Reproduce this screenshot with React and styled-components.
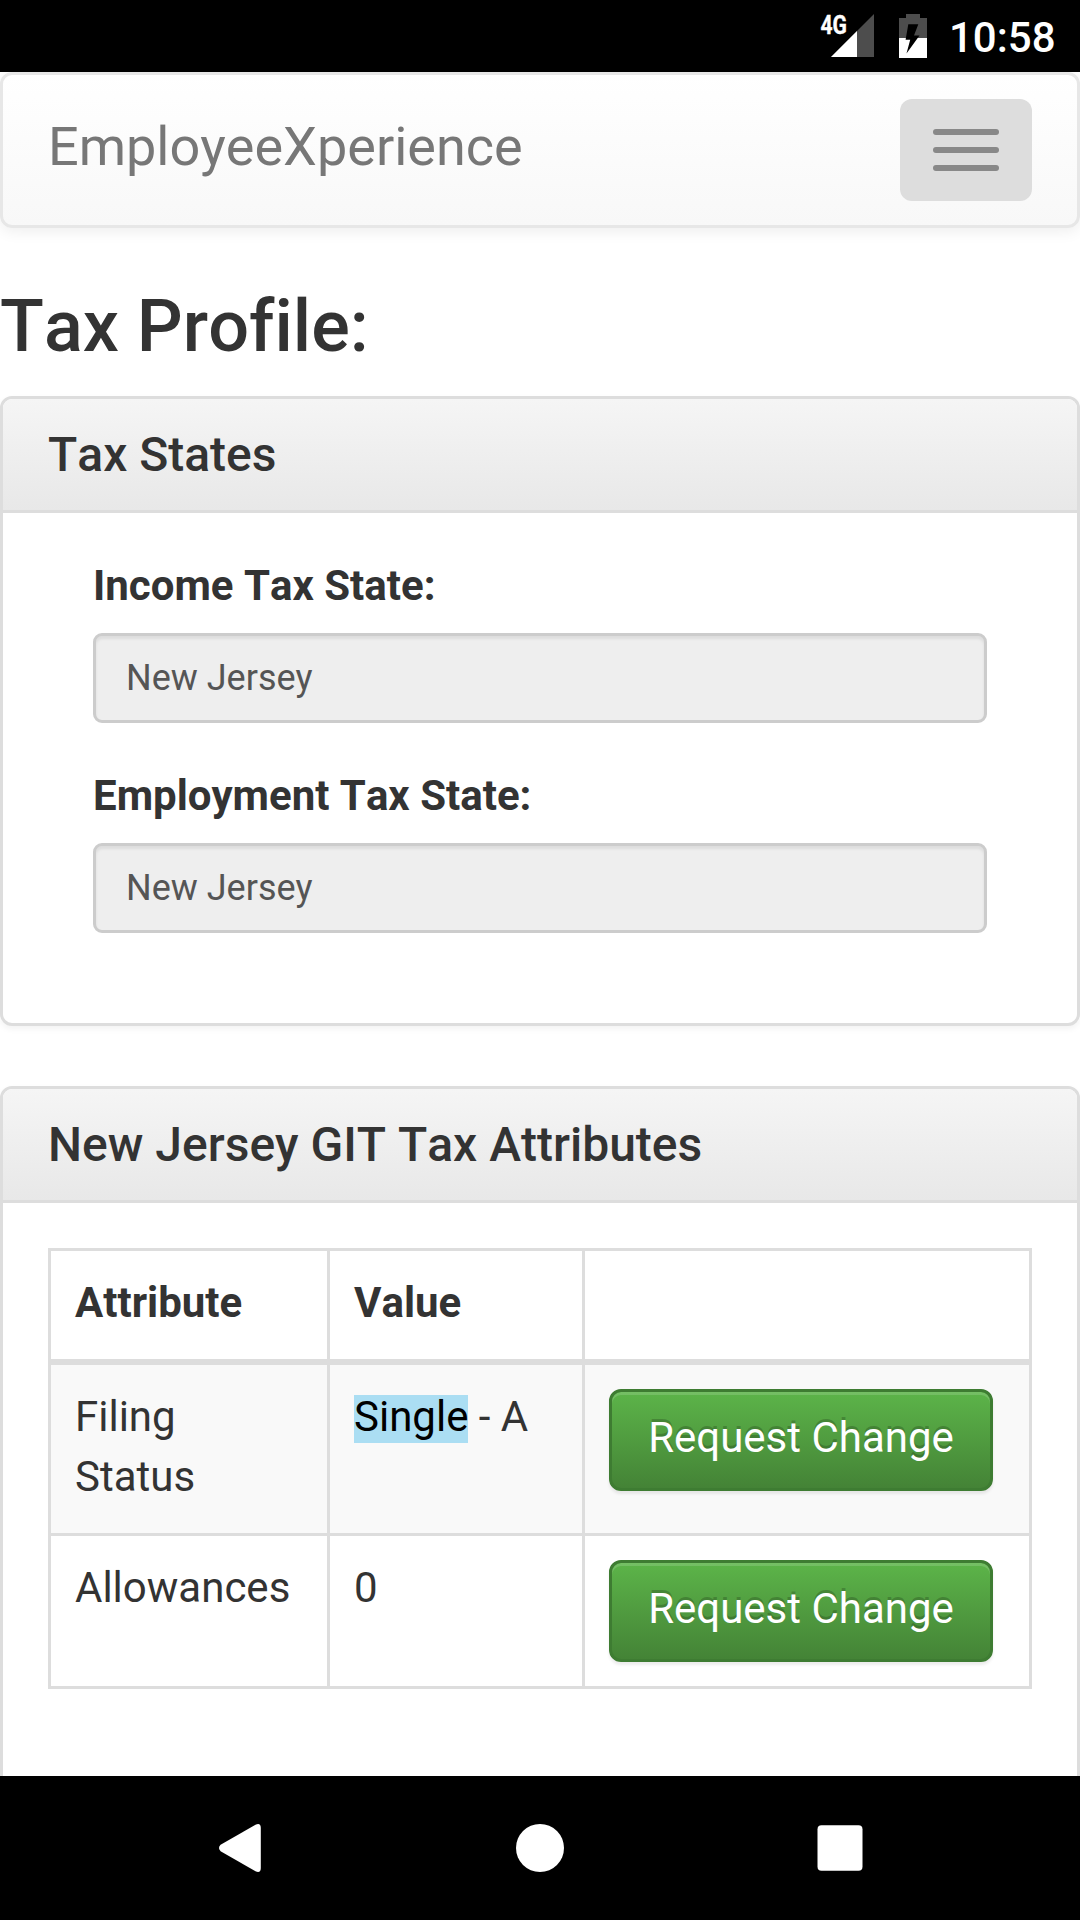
import React from "react";
import styled, { createGlobalStyle } from "styled-components";

const Global = createGlobalStyle`
  *, *::before, *::after { box-sizing: border-box; }
  html, body { margin: 0; padding: 0; background: #fff; }
  body {
    font-family: Roboto, "Liberation Sans", sans-serif;
    font-size: 42px;
    line-height: 60px;
    font-kerning: none;
    font-variant-ligatures: none;
    color: #333;
  }
`;

const Screen = styled.div`
  display: flex;
  flex-direction: column;
  width: 1080px;
  height: 1920px;
  overflow: hidden;
`;

const StatusBar = styled.header`
  flex: none;
  height: 72px;
  display: flex;
  align-items: center;
  justify-content: flex-end;
  padding-right: 25px;
  background: #000;
  color: #fff;
`;

const SignalIcon = styled.svg`
  width: 56px;
  height: 72px;
  margin-right: 23px;
  flex: none;
`;

const BatteryIcon = styled.svg`
  width: 28px;
  height: 72px;
  margin-right: 22px;
  flex: none;
`;

const Clock = styled.span`
  font-size: 42px;
  font-weight: 500;
  line-height: 72px;
  width: 106px;
  padding-top: 4px;
`;

const Page = styled.main`
  flex: 1;
  min-height: 0;
  overflow: hidden;
  background: #fff;
`;

const Navbar = styled.nav`
  height: 156px;
  display: flex;
  justify-content: space-between;
  align-items: flex-start;
  padding: 24px 45px;
  border: 3px solid #e7e7e7;
  border-radius: 12px;
  background: linear-gradient(to bottom, #fff 0%, #f8f8f8 100%);
  box-shadow: inset 0 3px 0 rgba(255, 255, 255, 0.15), 0 3px 15px rgba(0, 0, 0, 0.075);
`;

const Brand = styled.span`
  padding-top: 18px;
  font-size: 54px;
  line-height: 60px;
  color: #777;
  text-shadow: 0 3px 0 rgba(255, 255, 255, 0.25);
`;

const Toggle = styled.button`
  width: 132px;
  height: 102px;
  display: flex;
  flex-direction: column;
  align-items: center;
  justify-content: center;
  gap: 12px;
  padding: 0;
  border: 0;
  border-radius: 12px;
  background: #ddd;
`;

const ToggleBar = styled.span`
  width: 66px;
  height: 6px;
  border-radius: 3px;
  background: #888;
`;

const PageTitle = styled.h1`
  margin: 60px 0 30px;
  font-size: 72px;
  font-weight: 500;
  line-height: 78px;
`;

const Panel = styled.section`
  margin-bottom: 60px;
  border: 3px solid #ddd;
  border-radius: 12px;
  background: #fff;
  box-shadow: 0 3px 6px rgba(0, 0, 0, 0.05);
`;

const PanelHeading = styled.div`
  padding: 30px 45px;
  border-bottom: 3px solid #ddd;
  border-radius: 9px 9px 0 0;
  background: linear-gradient(to bottom, #f5f5f5 0%, #e8e8e8 100%);
`;

const PanelTitle = styled.h2`
  margin: 0;
  font-size: 48px;
  font-weight: 500;
  line-height: 51px;
`;

const PanelBody = styled.div`
  padding: 45px;
`;

const Field = styled.div`
  padding: 0 45px;
  margin-bottom: 45px;
`;

const Label = styled.label`
  display: block;
  padding-bottom: 19px;
  line-height: 56px;
  font-weight: 700;
`;

const Input = styled.div`
  height: 90px;
  padding: 12px 30px;
  border: 3px solid #ccc;
  border-radius: 9px;
  background: #eee;
  box-shadow: inset 0 3px 3px rgba(0, 0, 0, 0.075);
  font-size: 36px;
  line-height: 60px;
  color: #555;
`;

const Table = styled.div`
  margin-bottom: 60px;
  border: 3px solid #ddd;
  border-top-width: 0;
`;

const Row = styled.div`
  display: grid;
  grid-template-columns: 276px 255px 447px;
  border-top: ${(p) => (p.$afterHead ? 6 : 3)}px solid #ddd;
  background: ${(p) => (p.$striped ? "#f9f9f9" : "#fff")};
`;

const Cell = styled.div`
  padding: ${(p) => (p.$action ? "24px" : "22px 24px 26px")};
  font-weight: ${(p) => (p.$head ? 700 : 400)};

  & + & {
    border-left: 3px solid #ddd;
  }
`;

const Selected = styled.span`
  display: inline-block;
  padding-bottom: 5px;
  line-height: 43px;
  color: #000;
  background: #abdef3;
`;

const SuccessButton = styled.button`
  display: block;
  width: 384px;
  height: 102px;
  padding: 16px 0 20px;
  border: 3px solid #3e7c32;
  border-radius: 12px;
  background: linear-gradient(to bottom, #5cb449 0%, #448336 100%);
  box-shadow: inset 0 3px 0 rgba(255, 255, 255, 0.15), 0 3px 3px rgba(0, 0, 0, 0.075);
  font: 400 42px/60px Roboto, "Liberation Sans", sans-serif;
  font-kerning: none;
  color: #fff;
  text-shadow: 0 -3px 0 rgba(0, 0, 0, 0.2);
  white-space: nowrap;
`;

const SystemNav = styled.footer`
  flex: none;
  height: 144px;
  background: #000;
  display: flex;
  align-items: center;
  justify-content: space-between;
  padding: 0 216px;
`;

const NavIcon = styled.svg`
  width: 48px;
  height: 48px;
  fill: #fff;
`;

const taxStates = [
  { label: "Income Tax State:", value: "New Jersey" },
  { label: "Employment Tax State:", value: "New Jersey" },
];

const attributes = [
  { name: "Filing Status", value: <><Selected>Single</Selected> - A</> },
  { name: "Allowances", value: "0" },
];

export default function App() {
  return (
    <>
      <Global />
      <Screen>
        <StatusBar>
          <SignalIcon viewBox="820 0 56 72">
            <path d="M831 57L874 14V57Z" fill="#4d4d4d" />
            <path d="M831 57L857 31V57Z" fill="#fff" />
            <text x="820.5" y="33.7" fontSize="26" fontWeight="700" fill="#fff" stroke="#fff" strokeWidth="0.4" textLength="26.5" lengthAdjust="spacingAndGlyphs">4G</text>
          </SignalIcon>
          <BatteryIcon viewBox="899 0 28 72">
            <path d="M899 18H906V14H920V18H927V38H899Z" fill="#4d4d4d" />
            <path d="M899 38H927V58H899Z" fill="#fff" />
            <path d="M908.3 24.3H918.3L914 35.6H919.5L906.5 53.5L910.2 39.8H905.6Z" fill="#000" />
          </BatteryIcon>
          <Clock>10:58</Clock>
        </StatusBar>
        <Page>
          <Navbar>
            <Brand>EmployeeXperience</Brand>
            <Toggle aria-label="Toggle navigation">
              <ToggleBar />
              <ToggleBar />
              <ToggleBar />
            </Toggle>
          </Navbar>
          <PageTitle>Tax Profile:</PageTitle>
          <Panel>
            <PanelHeading><PanelTitle>Tax States</PanelTitle></PanelHeading>
            <PanelBody>
              {taxStates.map((s) => (
                <Field key={s.label}>
                  <Label>{s.label}</Label>
                  <Input>{s.value}</Input>
                </Field>
              ))}
            </PanelBody>
          </Panel>
          <Panel>
            <PanelHeading><PanelTitle>New Jersey GIT Tax Attributes</PanelTitle></PanelHeading>
            <PanelBody>
              <Table>
                <Row>
                  <Cell $head>Attribute</Cell>
                  <Cell $head>Value</Cell>
                  <Cell />
                </Row>
                {attributes.map((a, i) => (
                  <Row key={a.name} $afterHead={i === 0} $striped={i % 2 === 0}>
                    <Cell>{a.name}</Cell>
                    <Cell>{a.value}</Cell>
                    <Cell $action><SuccessButton>Request Change</SuccessButton></Cell>
                  </Row>
                ))}
              </Table>
            </PanelBody>
          </Panel>
        </Page>
        <SystemNav>
          <NavIcon viewBox="0 0 48 48"><path d="M4.6 20.8L39.5 .7Q44.8 -1.5 44.8 4V44Q44.8 49.5 39.5 47.3L4.6 27.2Q1.4 24 4.6 20.8Z" /></NavIcon>
          <NavIcon viewBox="0 0 48 48"><circle cx="24" cy="24" r="24" /></NavIcon>
          <NavIcon viewBox="0 0 48 48"><rect x="1.5" y="1.2" width="45" height="45.5" rx="4" /></NavIcon>
        </SystemNav>
      </Screen>
    </>
  );
}
